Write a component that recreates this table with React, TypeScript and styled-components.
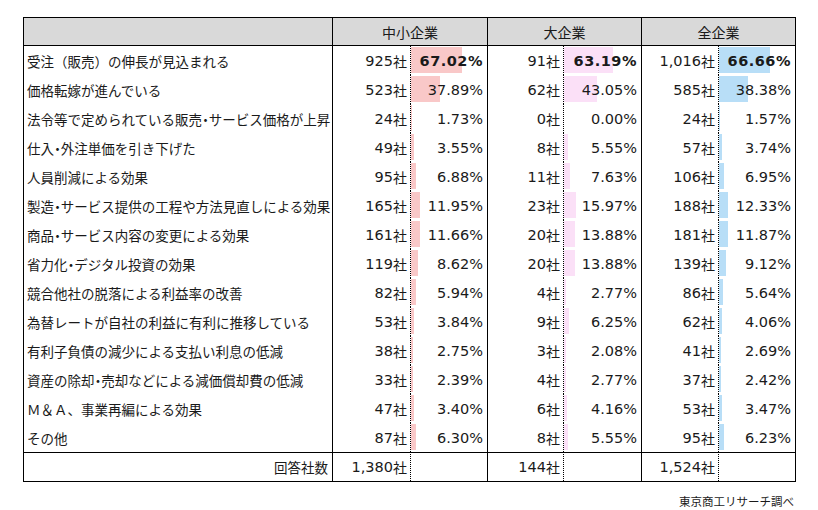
import React from "react";
import styled, { createGlobalStyle } from "styled-components";

const GlobalStyle = createGlobalStyle`
  html, body { margin: 0; padding: 0; background: #ffffff; }
  body { font-family: "Noto Sans CJK JP", sans-serif; color: #1a1a1a; }
`;

type Group = "sme" | "large" | "all";

const barColors: Record<Group, string> = {
  sme: "#f9c8c8",
  large: "#fbe0f7",
  all: "#b8def7",
};

interface Row {
  label: string;
  values: [number, number][];
  bold?: boolean;
}

const rows: Row[] = [
  { label: "受注（販売）の伸長が見込まれる", values: [[925, 67.02], [91, 63.19], [1016, 66.66]], bold: true },
  { label: "価格転嫁が進んでいる", values: [[523, 37.89], [62, 43.05], [585, 38.38]] },
  { label: "法令等で定められている販売・サービス価格が上昇", values: [[24, 1.73], [0, 0.0], [24, 1.57]] },
  { label: "仕入・外注単価を引き下げた", values: [[49, 3.55], [8, 5.55], [57, 3.74]] },
  { label: "人員削減による効果", values: [[95, 6.88], [11, 7.63], [106, 6.95]] },
  { label: "製造・サービス提供の工程や方法見直しによる効果", values: [[165, 11.95], [23, 15.97], [188, 12.33]] },
  { label: "商品・サービス内容の変更による効果", values: [[161, 11.66], [20, 13.88], [181, 11.87]] },
  { label: "省力化・デジタル投資の効果", values: [[119, 8.62], [20, 13.88], [139, 9.12]] },
  { label: "競合他社の脱落による利益率の改善", values: [[82, 5.94], [4, 2.77], [86, 5.64]] },
  { label: "為替レートが自社の利益に有利に推移している", values: [[53, 3.84], [9, 6.25], [62, 4.06]] },
  { label: "有利子負債の減少による支払い利息の低減", values: [[38, 2.75], [3, 2.08], [41, 2.69]] },
  { label: "資産の除却・売却などによる減価償却費の低減", values: [[33, 2.39], [4, 2.77], [37, 2.42]] },
  { label: "Ｍ＆Ａ、事業再編による効果", values: [[47, 3.4], [6, 4.16], [53, 3.47]] },
  { label: "その他", values: [[87, 6.3], [8, 5.55], [95, 6.23]] },
];

const groups: { key: Group; title: string; total: number }[] = [
  { key: "sme", title: "中小企業", total: 1380 },
  { key: "large", title: "大企業", total: 144 },
  { key: "all", title: "全企業", total: 1524 },
];

const Page = styled.div`
  padding: 17px 0 0 23px;
  width: 773px;
`;

const Table = styled.div`
  display: grid;
  grid-template-columns: 308px 78px 77px 76px 78px 77px 77px;
  border: 1px solid #000;
  width: max-content;
`;

const HeaderCell = styled.div<{ $span?: number; $divider?: boolean }>`
  grid-column: span ${(p) => p.$span ?? 1};
  height: 28px;
  box-sizing: border-box;
  background: #d9d9d9;
  border-bottom: 1px solid #000;
  border-left: ${(p) => (p.$divider ? "1px solid #000" : "none")};
  display: flex;
  align-items: center;
  justify-content: center;
  font-size: 14px;
  line-height: 1;
`;

const LabelCell = styled.div<{ $total?: boolean }>`
  height: 29px;
  box-sizing: border-box;
  border-top: ${(p) => (p.$total ? "1px solid #000" : "none")};
  display: flex;
  align-items: center;
  justify-content: ${(p) => (p.$total ? "flex-end" : "flex-start")};
  padding: ${(p) => (p.$total ? "0 4px 0 0" : "0 0 0 3px")};
  font-size: 13.5px;
  white-space: nowrap;
`;

const LabelText = styled.span`
  white-space: nowrap;
`;

const Dot = styled.span`
  font-feature-settings: "halt" 1;
`;

const CountCell = styled.div<{ $total?: boolean }>`
  height: 29px;
  box-sizing: border-box;
  border-left: 1px solid #000;
  border-top: ${(p) => (p.$total ? "1px solid #000" : "none")};
  display: flex;
  align-items: center;
  justify-content: flex-end;
  padding-right: 3px;
  font-family: "DejaVu Sans", "Noto Sans CJK JP", sans-serif;
  font-size: 14.5px;
  white-space: nowrap;
`;

const Sha = styled.span`
  font-family: "Noto Sans CJK JP", sans-serif;
  font-size: 14px;
`;

const PctCell = styled.div<{ $total?: boolean; $bold?: boolean }>`
  height: 29px;
  box-sizing: border-box;
  border-left: 1px dotted #000;
  border-top: ${(p) => (p.$total ? "1px solid #000" : "none")};
  position: relative;
  display: flex;
  align-items: center;
  justify-content: flex-end;
  padding-right: 4px;
  font-family: "DejaVu Sans", sans-serif;
  font-size: 14.5px;
  font-weight: ${(p) => (p.$bold ? 700 : 400)};
  letter-spacing: ${(p) => (p.$bold ? "0.5px" : "0")};
  white-space: nowrap;
`;

const Bar = styled.div<{ $group: Group }>`
  position: absolute;
  left: 0;
  top: 1px;
  bottom: 2px;
  background: ${(p) => barColors[p.$group]};
`;

const PctText = styled.span`
  position: relative;
`;

const Footer = styled.div`
  margin-top: 11px;
  padding-right: 2px;
  text-align: right;
  font-size: 11.5px;
  line-height: 16px;
`;

const fmtCount = (n: number) => n.toLocaleString("en-US");

function Label({ text }: { text: string }) {
  const parts = text.split("・");
  return (
    <LabelText>
      {parts.map((p, i) => (
        <React.Fragment key={i}>
          {i > 0 && <Dot>・</Dot>}
          {p}
        </React.Fragment>
      ))}
    </LabelText>
  );
}

export default function App() {
  return (
    <>
      <GlobalStyle />
      <Page>
        <Table>
          <HeaderCell />
          {groups.map((g) => (
            <HeaderCell key={g.key} $span={2} $divider>
              {g.title}
            </HeaderCell>
          ))}
          {rows.map((r) => (
            <React.Fragment key={r.label}>
              <LabelCell>
                <Label text={r.label} />
              </LabelCell>
              {r.values.map(([count, pct], i) => (
                <React.Fragment key={groups[i].key}>
                  <CountCell>
                    {fmtCount(count)}
                    <Sha>社</Sha>
                  </CountCell>
                  <PctCell $bold={r.bold}>
                    <Bar $group={groups[i].key} style={{ width: `${pct}%` }} />
                    <PctText>{pct.toFixed(2)}%</PctText>
                  </PctCell>
                </React.Fragment>
              ))}
            </React.Fragment>
          ))}
          <LabelCell $total>回答社数</LabelCell>
          {groups.map((g) => (
            <React.Fragment key={g.key}>
              <CountCell $total>
                {fmtCount(g.total)}
                <Sha>社</Sha>
              </CountCell>
              <PctCell $total />
            </React.Fragment>
          ))}
        </Table>
        <Footer>東京商工リサーチ調べ</Footer>
      </Page>
    </>
  );
}
